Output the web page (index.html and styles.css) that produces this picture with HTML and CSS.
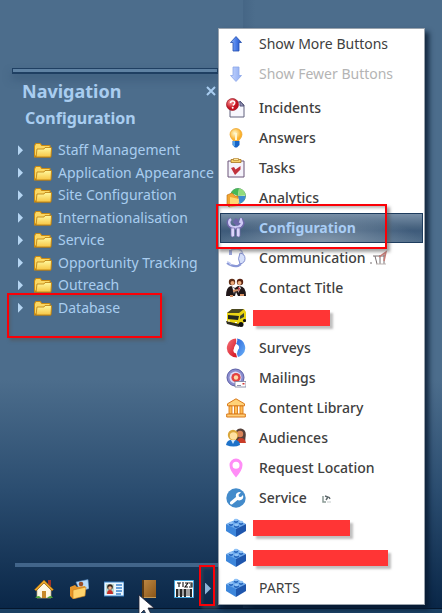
FILE: index.html
```html
<!DOCTYPE html>
<html lang="en">
<head>
<meta charset="utf-8">
<meta name="viewport" content="width=device-width, initial-scale=1">
<title>Navigation</title>
<link rel="stylesheet" href="styles.css">
</head>
<body>
<svg class="defs" aria-hidden="true">
  <defs>
    <linearGradient id="gold" x2="0" y2="1"><stop offset="0" stop-color="#fff9a0"/><stop offset="1" stop-color="#f7c544"/></linearGradient>
    <linearGradient id="blue" x2="1" y2="0"><stop offset="0" stop-color="#8fb4f8"/><stop offset=".5" stop-color="#4a7de8"/><stop offset="1" stop-color="#1f4fc0"/></linearGradient>
    <linearGradient id="pale" x2="1" y2="0"><stop offset="0" stop-color="#c3d5ff"/><stop offset="1" stop-color="#8fabf0"/></linearGradient>
    <linearGradient id="leather" x2="1" y2="1"><stop offset="0" stop-color="#c08a45"/><stop offset="1" stop-color="#8a5518"/></linearGradient>
    <linearGradient id="crimson" x2="1" y2="1"><stop offset="0" stop-color="#f5727a"/><stop offset="1" stop-color="#d3101c"/></linearGradient>
    <linearGradient id="azure" x2="1" y2="1"><stop offset="0" stop-color="#2a62d8"/><stop offset="1" stop-color="#6cb4fa"/></linearGradient>
    <radialGradient id="red" cx=".35" cy=".3"><stop offset="0" stop-color="#ff9a9a"/><stop offset="1" stop-color="#c41220"/></radialGradient>
    <radialGradient id="bulb" cx=".4" cy=".4"><stop offset="0" stop-color="#fffbd0"/><stop offset="1" stop-color="#fbb12c"/></radialGradient>
  </defs>
  <symbol id="folder" viewBox="0 0 20 16">
    <path d="M1 3.500 2.500 1h5L9 3h8.500v3H19l-1 9.500H1z" fill="#c98a12"/>
    <path d="M2 4 3 2h4l1.500 2h8v9.500H2z" fill="#fbd863"/>
    <path d="M4 7h7l1-1.500h6.500L18 15H3z" fill="url(#gold)" stroke="#b97b0c" stroke-width=".8"/>
  </symbol>
  <symbol id="brick" viewBox="0 0 20 20">
    <path d="M0 6 11 1l9 5-10 6z" fill="#6caaec"/>
    <path d="M0 6v7l10 6v-8z" fill="#3c86db"/>
    <path d="M10 11v8l10-6V6z" fill="#1e56ad"/>
    <g fill="#2565bd"><path d="M3 5v2q2 2 4 0V5zM8 7v2q2 2 5 0V7zM8 2v2q2 2 4 0V2zM13 4v2q2 2 4 0V4z"/></g>
    <g fill="#8fc2f7"><ellipse cx="5" cy="5" rx="2.200" ry="1.200"/><ellipse cx="10.500" cy="7" rx="2.400" ry="1.200"/><ellipse cx="10" cy="2" rx="2.200" ry="1.200"/><ellipse cx="15" cy="4" rx="2.200" ry="1.200"/></g>
  </symbol>
</svg>

<main class="desk">
  <section class="panel" aria-label="Navigation panel">
    <div class="splitter"></div>
    <header class="panel-head">
      <h1>Navigation</h1>
      <button class="close" aria-label="Close"><svg viewBox="0 0 10 10"><path d="m1 1 8 8M9 1 1 9" stroke="currentColor" stroke-width="2"/></svg></button>
    </header>
    <h2>Configuration</h2>
    <ul class="tree">
      <li><span class="caret"></span><svg class="folder"><use href="#folder"/></svg><a href="#">Staff Management</a></li>
      <li><span class="caret"></span><svg class="folder"><use href="#folder"/></svg><a href="#">Application Appearance</a></li>
      <li><span class="caret"></span><svg class="folder"><use href="#folder"/></svg><a href="#">Site Configuration</a></li>
      <li><span class="caret"></span><svg class="folder"><use href="#folder"/></svg><a href="#">Internationalisation</a></li>
      <li><span class="caret"></span><svg class="folder"><use href="#folder"/></svg><a href="#">Service</a></li>
      <li><span class="caret"></span><svg class="folder"><use href="#folder"/></svg><a href="#">Opportunity Tracking</a></li>
      <li><span class="caret"></span><svg class="folder"><use href="#folder"/></svg><a href="#">Outreach</a></li>
      <li><span class="caret"></span><svg class="folder"><use href="#folder"/></svg><a href="#">Database</a><i class="mark mark-database"></i></li>
    </ul>
    <div class="toolbar">
      <button aria-label="Home"><svg viewBox="0 0 20 20"><path d="M14 1h3v6h-3z" fill="#a03428"/><path d="M3 10 10 3l7 7v9H3z" fill="#fff8e4" stroke="#b9a67e" stroke-width=".7"/><path d="M.5 10.500 10 1l9.500 9.500-1.500 1.500-8-8-8 8z" fill="#e8a427" stroke="#8d5a12" stroke-width=".7"/><path d="M8 12h4v7H8z" fill="#c98a2b"/><path d="M1 19q4-4 6 0zM13 19q4-4 6 0z" fill="#4da53a"/></svg></button>
      <button aria-label="Contacts"><svg viewBox="0 0 20 20"><path d="m7 3 12-2.500 1 9-9 3z" fill="#b9dcfa" stroke="#5487bd" stroke-width=".6"/><circle cx="12" cy="5" r="2.300" fill="#9a4d27"/><path d="M9 10q2-4 6-1l-3 3z" fill="#d24a35"/><path d="m1 8 5-2 2 2 8-1v9L4 20 1 17z" fill="#e5952a"/><path d="m4 11 13-3-1 9-12 3z" fill="#ffd36c" stroke="#c67a15" stroke-width=".6"/></svg></button>
      <button aria-label="Card"><svg viewBox="0 0 20 20"><path d="M0 3h20v14H0z" fill="#eaf6ff" stroke="#3782c8"/><path d="M2 5h8v10H2z" fill="#bcd9cf"/><circle cx="6" cy="8" r="2.800" fill="#33211a"/><circle cx="6" cy="9" r="1.800" fill="#efb38a"/><path d="M3 15q0-4 3-4t3 4z" fill="#c52f28"/><path d="M12 6h6M12 9h6M12 12h6M12 15h5" stroke="#3b83cb" stroke-width="1.500"/></svg></button>
      <button aria-label="Book"><svg viewBox="0 0 20 20"><path d="M3 1h14v18H5q-2 0-2-2z" fill="url(#leather)"/><path d="M3 1h2v18q-2 0-2-2z" fill="#5c3a12"/><path d="M5 18.500h12" stroke="#c39a58"/></svg></button>
      <button aria-label="Barcode"><svg viewBox="0 0 20 20"><path d="M.5 1.500h19v17H.5z" fill="#fff" stroke="#43a6dd"/><path d="M3 4h4M5 4v4M9 3v5M11 4h3l-3 4h3M15 4h3v4h-3M16 6h2" fill="none" stroke="#111" stroke-width="1.100"/><path d="M3 10v8M7 10v8M11 10v8M17 10v8" stroke="#111" stroke-width="1.800"/><path d="M5 10v7M9 10v7M13 10v7M15 10v7" stroke="#111" stroke-width=".8"/></svg></button>
      <button class="more" aria-label="More buttons"><span class="caret"></span><i class="mark mark-more"></i></button>
    </div>
  </section>

  <menu class="popup">
    <li><button class="plain"><svg viewBox="0 0 20 20"><path d="m10 2.500 5.500 6H13V17H7V8.500H4.500z" fill="url(#blue)" stroke="#234fae" stroke-width=".8"/></svg>Show More Buttons</button></li>
    <li><button class="plain" disabled><svg viewBox="0 0 20 20"><path d="m10 17.500-5.500-6H7V3h6v8.500h2.500z" fill="url(#pale)" stroke="#8ba6e8" stroke-width=".8"/></svg>Show Fewer Buttons</button></li>
    <li class="first"><button><svg viewBox="0 0 20 20"><path d="M4 4h11l3 3v12H4z" fill="#f7f7fd" stroke="#62627e"/><path d="M14 3v5h4z" fill="#9a9abc" stroke="#55557a"/><circle cx="6.500" cy="6.500" r="6" fill="url(#red)" stroke="#981522" stroke-width=".7"/><path d="M4.500 5q.2-2 2.200-2t2 2q0 1-2 2.300" fill="none" stroke="#fff" stroke-width="1.500"/><circle cx="6.700" cy="9.700" r="1" fill="#fff"/></svg>Incidents</button></li>
    <li><button><svg viewBox="0 0 20 20"><path d="M10 .5a6 6 0 0 1 6 6q0 2.500-3 6H7q-3-3.500-3-6a6 6 0 0 1 6-6z" fill="url(#bulb)" stroke="#eda022" stroke-width=".7"/><path d="M10 5v7" stroke="#fff6d0" stroke-width="2"/><path d="M6.500 13h7v4L11 19.500H9L6.500 17z" fill="#1663c7"/><path d="M8 13v5" stroke="#69b7f2" stroke-width="1.500"/></svg>Answers</button></li>
    <li><button><svg viewBox="0 0 20 20"><path d="M2 3h16v16H2z" fill="#f5f3fb" stroke="#6a5578"/><path d="M5 1.500h10v3H5z" fill="#f6cf69" stroke="#a8741d" stroke-width=".8"/><path d="M7.500.5h5v2h-5z" fill="#ffe69c" stroke="#a8741d" stroke-width=".6"/><path d="m5 10 3-1 1.500 2.500L14.500 8v3.500L9 17z" fill="#c1323c"/></svg>Tasks</button></li>
    <li><button><svg viewBox="0 0 20 20"><circle cx="12" cy="8" r="7.500" fill="#f6f6e8" stroke="#3c8b54" stroke-width=".8"/><path d="M12 8 5 5q2-5 8-4.500z" fill="#45b757"/><path d="M12 8 13 .5q6 1 6.500 7z" fill="#91db7c"/><path d="M12 8h7.500q-.5 6-6 7.500z" fill="#3d8bd1"/><path d="m1 7 5-2 3 3h3v8l-9 3-2-2z" fill="#f2a531" stroke="#b66b12" stroke-width=".6"/><path d="m4 9 9 2-1 7-8 1.500z" fill="#ffd874"/></svg>Analytics</button></li>
    <li><button class="active"><svg viewBox="0 0 20 20"><path d="M5 1Q1 3 3 7q3 4 7 3 6 0 7-5l-2-4-1 4-3 1-2-2 2-3" fill="none" stroke="#6c66a8" stroke-width="3.600"/><path d="M5 1Q2 3 4 7q3 3 6 2 5 0 6-4l-1-3-1 3" fill="none" stroke="#cfcaf6" stroke-width="2.400"/><path d="M5 10h3.500v8q-2 2-3.500 0zM10.500 10H14v8q-1.500 2-3.500 0z" fill="#dad6fa" stroke="#726ba9" stroke-width=".7"/></svg><span>Configuration</span><i class="mark mark-config"></i></button></li>
    <li><button><svg viewBox="0 0 20 20"><path d="M5 2q12-4 12 7" fill="none" stroke="#b0b8e2" stroke-width="1.600"/><path d="M3 2h3v5H3z" fill="#9aa5dc"/><path d="M14 5q5 1 5 5.500T14 16q-3-5 0-11z" fill="#d6dffa" stroke="#7785c9" stroke-width=".9"/><path d="M1 15q5 4 11 3l3-2" fill="none" stroke="#8a97d6" stroke-width="2.200"/><path d="M1 14q3 0 4 3" fill="none" stroke="#c3ccf1" stroke-width="1.500"/></svg>Communication<svg class="tail" viewBox="0 0 20 20"><path d="M1 14v2M5 8l2 8M10 7v9M14 5v11M3 8h12" stroke="#776f70"/><path d="m9 9 7-5-2 9" fill="none" stroke="#c97b77" stroke-width="1.500"/><path d="M6 16h10" stroke="#bcb4b2"/></svg></button></li>
    <li><button><svg viewBox="0 0 20 20"><circle cx="6" cy="4" r="3.200" fill="#5e2d16"/><circle cx="6.500" cy="5" r="2" fill="#eaa87a"/><circle cx="14" cy="4" r="3.200" fill="#59210f"/><circle cx="13.500" cy="5" r="2" fill="#f0b486"/><path d="M0 18q0-9 5-10l4 2 3-2q8-1 8 10h-8l-2-4-1 4z" fill="#211719"/><path d="m6 8 3 3-1 5zM13 8l2 2-3 5z" fill="#eee"/><path d="m12 9 2 1-1 4z" fill="#c2242a"/><path d="m7 13 5-1M4 18h3M14 17h4" stroke="#d69265" stroke-width="2"/></svg>Contact Title</button></li>
    <li><button aria-label="Item 1"><svg viewBox="0 0 20 20"><path d="m1 5 5-4h12l2 3v9l-6 5-13-3z" fill="#ead414"/><path d="m1 5 5-4h12l-5 4z" fill="#4a4821"/><path d="m2 7 11 1-1 4-10-1z" fill="#23281f"/><path d="m14 8 4-3v4l-4 2z" fill="#3c452f"/><path d="m0 13 13 3v3L1 16z" fill="#302e25"/><circle cx="15" cy="16.500" r="2.500" fill="#111"/><circle cx="18.500" cy="12.500" r="1.600" fill="#111"/><path d="M2 13h2M9 14.500h2" stroke="#fff"/></svg><span class="redact redact-short"></span></button></li>
    <li><button><svg viewBox="0 0 20 20"><path d="M10 .5A9.500 9.500 0 0 0 4 17q3 2.500 7 2.500l-1-4q-4-1-2-5 3-4 2-10z" fill="url(#crimson)"/><path d="M11 .5A9.500 9.500 0 0 1 16 17q-2 1.500-4 2l-1-3q-1-3 2-6 0-3-3-4 2-3 1-5.500z" fill="url(#azure)"/><path d="M10 6q-4 5 1 10 0-3 2-6 0-3-3-4z" fill="#fff"/></svg>Surveys</button></li>
    <li><button><svg viewBox="0 0 20 20"><circle cx="9.500" cy="9.500" r="8.500" fill="#8a8ccd" stroke="#5c5fa6"/><circle cx="9.500" cy="9.500" r="6" fill="#dcdcf8"/><circle cx="10" cy="9.500" r="4.600" fill="#e34240"/><circle cx="10" cy="9.500" r="2.200" fill="#ffd9a5"/><path d="M9 13.500h11V19H9z" fill="#fff" stroke="#777c9a" stroke-width=".8"/><path d="M16.500 15h2v1.500h-2z" fill="#d23733"/><path d="M11 17.500h4" stroke="#6c7399" stroke-width=".8"/></svg>Mailings</button></li>
    <li><button><svg viewBox="0 0 20 20"><path d="m10 .8 8.500 5v2h-17v-2z" fill="#ffd278" stroke="#d9791a"/><path d="M3 8h3v8H3zM8.500 8h3v8h-3zM14 8h3v8h-3z" fill="#ffbf57" stroke="#d9791a" stroke-width=".9"/><path d="M.7 16h18.600v3H.7z" fill="#ffcf79" stroke="#d9791a"/></svg>Content Library</button></li>
    <li><button><svg viewBox="0 0 20 20"><path d="M9 8q0-8 6-7.500 6 1 4.500 9L19 15h-8z" fill="#56413a"/><circle cx="14" cy="6" r="3.200" fill="#d9845a"/><path d="M11 15q0-5 4-5t5 5z" fill="#c93c27"/><circle cx="7" cy="7" r="5.200" fill="#d9a63b"/><circle cx="7.500" cy="8" r="3.700" fill="#ffe0a0"/><path d="M0 17q1-5 5-5l2 1 3-1q4 1 4 5-6 3-14 0z" fill="#1e72c9"/><path d="m5 12 2 4 2-4z" fill="#d1e7fb"/></svg>Audiences</button></li>
    <li><button><svg viewBox="0 0 20 20"><path fill-rule="evenodd" d="M10 .5a6.500 6.500 0 0 1 6.500 6.500Q16.500 12 10 19.500 3.500 12 3.500 7A6.500 6.500 0 0 1 10 .5zm0 3.200a3.500 3.500 0 1 0 0 7 3.500 3.500 0 0 0 0-7z" fill="#ff8df6"/></svg>Request Location</button></li>
    <li><button><svg viewBox="0 0 20 20"><circle cx="10" cy="10" r="9.700" fill="#438bcb"/><path d="m4 14 6-5q-1-4 3-5l2 .2-2.500 2.500.5 2 2 .3L17 7q1 4-2 5-2 .8-3.500 0L6 16.500q-2.500.5-2-2.500z" fill="#fff"/></svg>Service<svg class="tail tail-far" viewBox="0 0 20 20"><path d="M6 8v6h3" fill="none" stroke="#8a9a95" stroke-width="1.500"/><path d="m8 8 3 1-2 3M12 9l1 2" fill="none" stroke="#5f696c" stroke-width="1.400"/><path d="M10 14h4" stroke="#c5cbcc"/></svg></button></li>
    <li><button aria-label="Item 2"><svg><use href="#brick"/></svg><span class="redact redact-mid"></span></button></li>
    <li><button aria-label="Item 3"><svg><use href="#brick"/></svg><span class="redact redact-long"></span></button></li>
    <li><button class="plain"><svg><use href="#brick"/></svg>PARTS</button></li>
  </menu>

  <svg class="pointer" viewBox="0 0 16 24" aria-hidden="true"><path d="M1 1v20l5-5 4 8 4-2-4-8h6z" fill="#fff" stroke="#223" stroke-width=".8"/></svg>
</main>
</body>
</html>
```
FILE: styles.css
```css
* { box-sizing: border-box; }

body {
  margin: 0;
  font: 14px/22px "Noto Sans", "Open Sans", sans-serif;
  color: #404040;
}

button {
  padding: 0;
  border: 0;
  background: none;
  font: inherit;
  color: inherit;
}

ul, menu { margin: 0; padding: 0; list-style: none; }
.defs { position: absolute; width: 0; height: 0; }

.desk {
  position: relative;
  display: flex;
  min-height: 100vh;
  overflow: hidden;
  padding-bottom: 5px;
  background:
    linear-gradient(#05172d 0 1px, #1b4063 1px) bottom / 100% 5px no-repeat,
    linear-gradient(90deg, #3f5f7f80, #3f5f7f00) 243px 0 / 12px 100% no-repeat,
    linear-gradient(#4c6d8c 0, #4c6d8c 62%, #2b4d70 80%, #0a2748 99%);
}

.panel {
  flex: 0 0 218px;
  display: flex;
  flex-direction: column;
  padding-top: 68px;
  color: #a9cdf0;
}

.splitter {
  height: 6px;
  margin-left: 12px;
  border: 1px solid #1f3f62;
  border-bottom-width: 2px;
  background: #5f82a3;
  box-shadow: 0 5px 8px #2d4c6c80;
}

.panel-head {
  display: flex;
  align-items: center;
  justify-content: space-between;
  padding: 5px 2px 0 22px;
}

h1, h2 { margin: 0; font-weight: 700; }
h1 { font-size: 18px; line-height: 24px; }
h2 { padding: 3px 0 0 25px; font-size: 16px; line-height: 24px; }

.close { height: 10px; }
.close svg { display: block; width: 10px; height: 10px; }

.tree {
  display: grid;
  grid-auto-rows: 1fr;
  height: 180px;
  margin-top: 9px;
}

.tree li {
  position: relative;
  display: flex;
  align-items: center;
  padding-left: 18px;
  white-space: nowrap;
}

.tree a { color: inherit; text-decoration: none; }

.caret {
  flex: none;
  width: 5px;
  height: 10px;
  background: #b5d5f2;
  clip-path: polygon(0 0, 100% 50%, 0 100%);
}

.folder { flex: none; width: 20px; height: 16px; margin: 0 5px 0 10px; }

.toolbar {
  display: flex;
  align-items: center;
  gap: 15px;
  margin: auto 0 0 15px;
  height: 45px;
  padding: 2px 0 0 19px;
  border-top: 4px solid #42658a;
}

.toolbar svg { display: block; width: 20px; height: 20px; }
.more { position: relative; margin-left: -4px; }
.more .caret { display: block; width: 6px; height: 12px; background: #8eb4d8; }

.popup {
  position: absolute;
  left: 218px;
  top: 28px;
  width: 207px;
  padding: 0 1px 1px;
  border: 1px solid #9aa3ad;
  background: #fff;
  box-shadow: 4px 4px 5px #06182dcc;
}

.popup button {
  position: relative;
  display: flex;
  align-items: center;
  width: 100%;
  height: 30px;
  padding-left: 6px;
  font-weight: 500;
  text-align: left;
  white-space: nowrap;
}

.popup svg { flex: none; width: 20px; height: 20px; margin-right: 13px; }
.popup .plain { font-weight: 400; }
.popup button:disabled { color: #b4b4b4; }
.popup .first { margin-top: 4px; }
.popup .tail { margin: 0 0 0 4px; }
.popup .tail-far { margin-left: 10px; }

.popup .active {
  border: 1px solid #1d3c5e;
  padding-left: 5px;
  background: radial-gradient(ellipse at 50% 100%, #8296aa 0, #8296aa00 70%), linear-gradient(#788fa7 0, #4b6682 45%, #3e5b7a 60%, #516d89 100%);
  font-weight: 700;
  color: #a9cdf5;
}

.redact {
  height: 16px;
  margin-left: -6px;
  background: #ff3535;
  box-shadow: 3px 3px 2px #8888;
}

.redact-short { width: 77px; }
.redact-mid { width: 97px; }
.redact-long { width: 135px; }

.mark {
  position: absolute;
  z-index: 1;
  border: 2px solid #fb0007;
  box-shadow: 3px 3px 3px #5558, inset 2px 2px 3px #5556;
  pointer-events: none;
}

.mark-database { left: 7px; top: -4px; width: 155px; height: 45px; }
.mark-config { left: -5px; top: -10px; width: 171px; height: 45px; }
.mark-more { left: -6px; top: -18px; width: 16px; height: 41px; }

.pointer {
  position: absolute;
  left: 138px;
  bottom: -5px;
  width: 16px;
  height: 24px;
}
```
